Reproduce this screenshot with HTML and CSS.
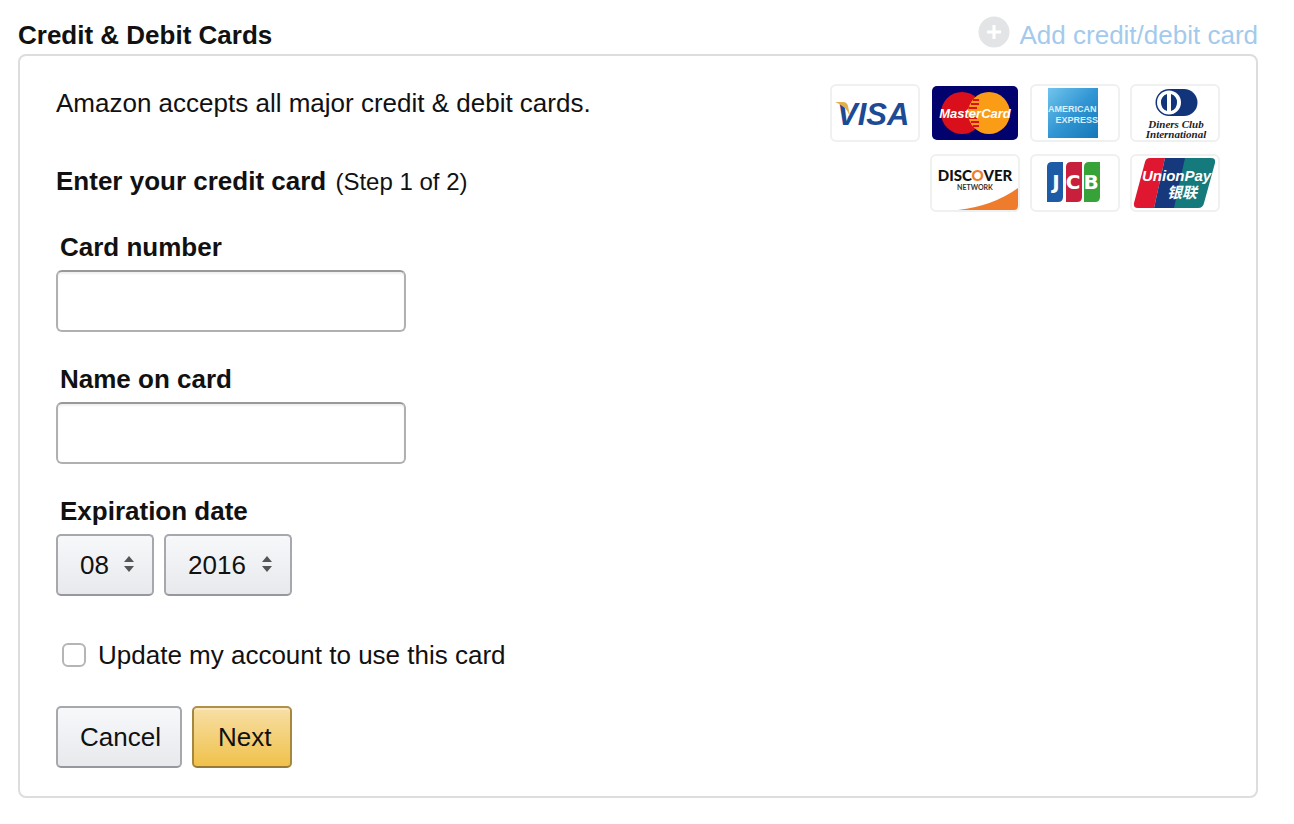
FILE: index.html
```html
<!DOCTYPE html>
<html lang="en">
<head>
  <meta charset="UTF-8" />
  <meta name="viewport" content="width=device-width, initial-scale=1.0" />
  <title>Credit &amp; Debit Cards</title>
  <link rel="stylesheet" href="styles.css">
</head>
<body>

  <header class="page-header">
    <h1>Credit &amp; Debit Cards</h1>
    <a class="add-card" href="#">
      <svg width="32" height="32" viewBox="0 0 32 32" aria-hidden="true">
        <circle cx="16" cy="16" r="15.5" fill="#e2e4e5"/>
        <path d="M16 9v14M9 16h14" stroke="#fff" stroke-width="3"/>
      </svg>
      <span>Add credit/debit card</span>
    </a>
  </header>

  <main class="panel">
    <form class="card-form">
      <p>Amazon accepts all major credit &amp; debit cards.</p>
      <h2>Enter your credit card <span class="step">(Step 1 of 2)</span></h2>

      <div class="field">
        <label for="cardNumber">Card number</label>
        <input type="text" id="cardNumber" class="text-input" />
      </div>

      <div class="field">
        <label for="cardName">Name on card</label>
        <input type="text" id="cardName" class="text-input" />
      </div>

      <div class="field">
        <label for="expMonth">Expiration date</label>
        <div class="row">
          <div class="select month">
            <select id="expMonth">
              <option>08</option>
            </select>
            <svg class="arrows" width="10" height="18" viewBox="0 0 10 18" aria-hidden="true">
              <path d="M5 1l5 6H0zM5 17l5-6H0z" fill="#555"/>
            </svg>
          </div>
          <div class="select year">
            <select id="expYear" aria-label="Expiration year">
              <option>2016</option>
            </select>
            <svg class="arrows" width="10" height="18" viewBox="0 0 10 18" aria-hidden="true">
              <path d="M5 1l5 6H0zM5 17l5-6H0z" fill="#555"/>
            </svg>
          </div>
        </div>
      </div>

      <div class="check">
        <input type="checkbox" id="updateAccount" />
        <label for="updateAccount">Update my account to use this card</label>
      </div>

      <div class="row">
        <button type="button" class="btn">Cancel</button>
        <button type="submit" class="btn btn-primary">Next</button>
      </div>
    </form>

    <div class="logos">
      <!-- Visa -->
      <svg class="logo" viewBox="0 0 90 58">
        <rect class="logo-bg" x="1" y="1" width="88" height="56" rx="5"/>
        <text x="7" y="41" class="visa">VISA</text>
        <path d="M5 18h8q4 0 5 4l2 10Q16 22 5 18z" fill="#e3b04a"/>
      </svg>

      <!-- MasterCard -->
      <svg class="logo" viewBox="0 0 90 58">
        <rect x="2" y="2" width="86" height="54" rx="5" fill="#02026f"/>
        <circle cx="32" cy="29" r="21" fill="#d9101c"/>
        <circle cx="59" cy="29" r="21" fill="#fb9c16"/>
        <path d="M43 16h6M41 20h8M39 24h8M39 34h8M41 38h8M43 42h6" stroke="#d9101c" stroke-width="2"/>
        <text x="45" y="34" class="mastercard">MasterCard</text>
      </svg>

      <!-- American Express -->
      <svg class="logo" viewBox="0 0 90 58">
        <defs>
          <linearGradient id="amexFill" x1="0" y1="0" x2="1" y2="1">
            <stop offset="0" stop-color="#71c5ec"/>
            <stop offset=".5" stop-color="#3296d4"/>
            <stop offset="1" stop-color="#1478b8"/>
          </linearGradient>
        </defs>
        <rect class="logo-bg" x="1" y="1" width="88" height="56" rx="5"/>
        <rect x="18" y="4" width="50" height="50" fill="url(#amexFill)"/>
        <text x="18" y="28" class="amex">AMERICAN</text>
        <text x="68" y="39" class="amex amex-end">EXPRESS</text>
      </svg>

      <!-- Diners Club -->
      <svg class="logo" viewBox="0 0 90 58">
        <rect class="logo-bg" x="1" y="1" width="88" height="56" rx="5"/>
        <path d="M40 5h14a13 13 0 0 1 0 27H40z" fill="#12347b"/>
        <circle cx="39" cy="18.5" r="13.5" fill="#12347b"/>
        <circle cx="39" cy="18.5" r="12" fill="#fff"/>
        <path d="M37 10a9 9 0 0 0 0 17zM41 10a9 9 0 0 1 0 17z" fill="#12347b"/>
        <text x="46" y="44" class="diners">Diners Club</text>
        <text x="46" y="54" class="diners">International</text>
      </svg>

      <!-- Discover -->
      <svg class="logo" viewBox="0 0 90 58">
        <rect class="logo-bg" x="1" y="1" width="88" height="56" rx="5"/>
        <path d="M28 56Q63 52 88 34v18q0 4-4 4z" fill="#ef7c2c"/>
        <text x="45" y="27" class="discover">DISC<tspan fill="#ef7c2c">O</tspan>VER</text>
        <text x="45" y="36" class="network">NETWORK</text>
      </svg>

      <!-- JCB -->
      <svg class="logo" viewBox="0 0 90 58">
        <rect class="logo-bg" x="1" y="1" width="88" height="56" rx="5"/>
        <path d="M22 8h11v35q0 5-5 5H17V13q0-5 5-5z" fill="#1d5ba6"/>
        <path d="M41 8h11v35q0 5-5 5H36V13q0-5 5-5z" fill="#c81f3c"/>
        <path d="M59 8h11v35q0 5-5 5H54V13q0-5 5-5z" fill="#36a238"/>
        <text x="26" y="35" class="jcb">J</text>
        <text x="43" y="35" class="jcb">C</text>
        <text x="61" y="35" class="jcb">B</text>
      </svg>

      <!-- UnionPay -->
      <svg class="logo" viewBox="0 0 90 58">
        <rect class="logo-bg" x="1" y="1" width="88" height="56" rx="5"/>
        <path d="M20 4h15L24 54H8q-5 0-4-5l11-41q1-4 5-4z" fill="#df1730"/>
        <path d="M35 4h22L46 54H24z" fill="#16387c"/>
        <path d="M55 4h26q5 0 4 5L74 49q-1 5-6 5H44z" fill="#147a7b"/>
        <text x="12" y="27" class="unionpay">UnionPay</text>
        <text x="37" y="44" class="unionpay-cn">银联</text>
      </svg>
    </div>
  </main>

</body>
</html>
```
FILE: styles.css
```css
:root {
  --text: #111;
  --link-muted: #a3caec;
  --panel-border: #ddd;
  --control-border: #a6a8ae;
}

* {
  margin: 0;
  padding: 0;
  box-sizing: border-box;
}

body {
  padding: 16px 36px 26px 18px;
  background: #fff;
  color: var(--text);
  font-family: "Liberation Sans", Arial, sans-serif;
  font-size: 26px;
  line-height: 38px;
}

h1,
h2 {
  font-size: 26px;
  font-weight: 700;
}

/* Header */
.page-header {
  display: flex;
  justify-content: space-between;
}

.add-card {
  display: flex;
  gap: 10px;
  color: var(--link-muted);
  text-decoration: none;
}

/* Panel */
.panel {
  display: flex;
  justify-content: space-between;
  align-items: flex-start;
  padding: 28px 36px;
  border: 2px solid var(--panel-border);
  border-radius: 8px;
}

.card-form h2 {
  margin: 40px 0 28px;
}

.step {
  margin-left: 2px;
  font-size: 24px;
  font-weight: 400;
  line-height: 1;
}

/* Fields */
.field {
  margin-bottom: 28px;
}

.field label {
  display: block;
  margin: 0 0 4px 4px;
  font-weight: 700;
}

.text-input {
  display: block;
  width: 350px;
  height: 62px;
  padding: 0 14px;
  border: 2px solid #b0b0b0;
  border-top-color: #999;
  border-radius: 6px;
  background: #fff;
  box-shadow: inset 0 2px 2px #f0f0f0;
  color: inherit;
  font: inherit;
}

.row {
  display: flex;
  gap: 10px;
}

.select {
  position: relative;
}

.select select,
.btn {
  display: block;
  height: 62px;
  padding: 0 19px 0 22px;
  border: 2px solid var(--control-border);
  border-bottom-color: #96989e;
  border-radius: 5px;
  background: linear-gradient(#f7f8fa, #e7e9ec);
  color: var(--text);
  font: inherit;
  cursor: pointer;
}

.select select {
  width: 100%;
  appearance: none;
}

.month {
  width: 98px;
}

.year {
  width: 128px;
}

.arrows {
  position: absolute;
  top: 21px;
  right: 20px;
  pointer-events: none;
}

.check {
  display: flex;
  align-items: center;
  gap: 12px;
  margin: 40px 0 32px 6px;
}

.check input {
  width: 24px;
  height: 24px;
  border: 2px solid #b5b5b5;
  border-radius: 6px;
  background: #fff;
  appearance: none;
}

.check input:checked {
  background: #e9b53a;
}

.btn-primary {
  padding-left: 24px;
  border-color: #b0914a #a5873f #99793a;
  background: linear-gradient(#f7dfa5, #f0c14b);
  box-shadow: inset 0 2px 0 #fae9c0;
}

/* Card logos */
.logos {
  display: grid;
  grid-template-columns: repeat(4, 90px);
  gap: 12px 10px;
}

.logo {
  display: block;
  width: 90px;
  height: 58px;
}

.logo:nth-child(5) {
  grid-column: 2;
}

.logo-bg {
  fill: #fff;
  stroke: #eef1f0;
  stroke-width: 2px;
}

.visa {
  fill: #1c4a94;
  font: italic 700 31px "Liberation Sans", sans-serif;
}

.mastercard {
  fill: #fff;
  font: italic 700 13px "Liberation Sans", sans-serif;
  text-anchor: middle;
}

.amex {
  fill: #d9eefa;
  font: 700 9px "Liberation Sans", sans-serif;
}

.amex-end {
  text-anchor: end;
}

.diners {
  fill: #222;
  font: italic 700 11px "Liberation Serif", serif;
  text-anchor: middle;
}

.discover {
  fill: #111;
  font: 900 15px Lato, sans-serif;
  text-anchor: middle;
}

.network {
  fill: #333;
  font: 700 7px Lato, sans-serif;
  text-anchor: middle;
}

.jcb {
  fill: #fff;
  font: 700 20px "DejaVu Sans", sans-serif;
  text-anchor: middle;
}

.unionpay {
  fill: #fff;
  font: italic 700 15px "Liberation Sans", sans-serif;
}

.unionpay-cn {
  fill: #fff;
  font: italic 700 15px "Noto Sans CJK SC", sans-serif;
}
```
